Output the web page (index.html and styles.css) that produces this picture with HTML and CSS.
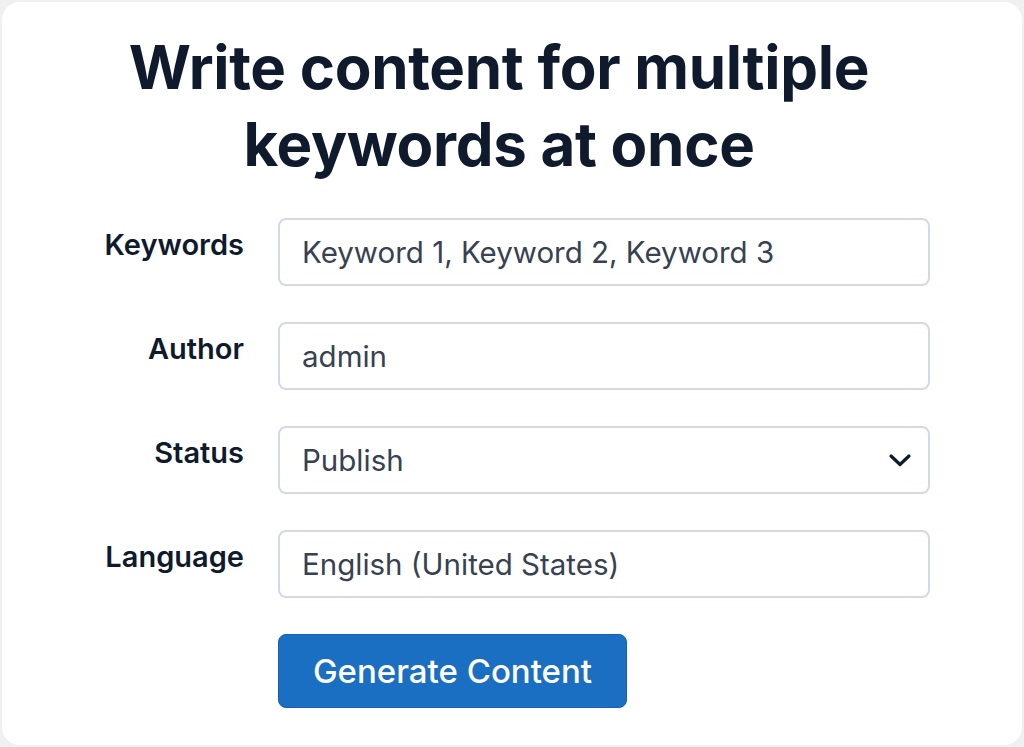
FILE: index.html
```html
<!DOCTYPE html>
<html lang="en">
<head>
<meta charset="utf-8">
<title>Write content for multiple keywords at once</title>
<link rel="stylesheet" href="styles.css">
</head>
<body>
<main class="card">
  <h1 class="title">Write content for multiple keywords at once</h1>
  <form class="form">
    <div class="row">
      <label class="label">Keywords</label>
      <div class="field">Keyword 1, Keyword 2, Keyword 3</div>
    </div>
    <div class="row">
      <label class="label">Author</label>
      <div class="field">admin</div>
    </div>
    <div class="row">
      <label class="label">Status</label>
      <div class="field select">
        <span>Publish</span>
        <svg class="chev" width="24" height="16" viewBox="0 0 24 16"><path d="M3 4 L12 12.5 L21 4" fill="none" stroke="#0f1b2d" stroke-width="3.2" stroke-linecap="round" stroke-linejoin="round"/></svg>
      </div>
    </div>
    <div class="row">
      <label class="label">Language</label>
      <div class="field">English (United States)</div>
    </div>
    <div class="row">
      <span class="label"></span>
      <button type="button" class="btn">Generate Content</button>
    </div>
  </form>
</main>
</body>
</html>
```
FILE: styles.css
```css
* { box-sizing: border-box; }
html, body { margin: 0; height: 100%; }
body {
  background: #eef0f2;
  padding: 2px;
  font-family: Inter, "Noto Sans", sans-serif;
  color: #0f1b2d;
}
.card {
  background: #ffffff;
  border-radius: 18px;
  height: 743px;
  padding-top: 27px;
}
.title {
  margin: 0 auto;
  width: 800px;
  padding-right: 26px;
  text-align: center;
  font-size: 60px;
  line-height: 77px;
  font-weight: 700;
  letter-spacing: -0.3px;
  color: #0f1b2d;
}
.form {
  margin-top: 35px;
  display: flex;
  flex-direction: column;
  gap: 36px;
}
.row {
  display: flex;
  align-items: flex-start;
}
.label {
  width: 276px;
  flex: none;
  text-align: right;
  padding-right: 34px;
  font-size: 29px;
  font-weight: 600;
  line-height: 34px;
  padding-top: 10px;
}
.field {
  width: 652px;
  height: 68px;
  border: 2px solid #d3dae2;
  border-radius: 8px;
  padding: 0 22px;
  display: flex;
  align-items: center;
  font-size: 29.5px;
  color: #374151;
}
.select { justify-content: space-between; }
.chev { margin-right: -6px; }
.btn {
  width: 349px;
  height: 74px;
  background: #1a6fc2;
  border: 1px solid #1560b0;
  border-radius: 8px;
  color: #ffffff;
  font-family: Inter, "Noto Sans", sans-serif;
  font-size: 33px;
  font-weight: 500;
  padding: 0;
}
```
